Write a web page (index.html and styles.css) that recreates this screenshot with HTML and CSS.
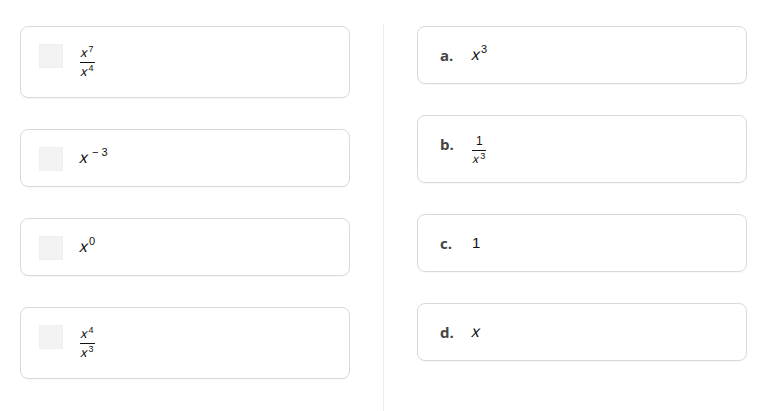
FILE: index.html
```html
<!DOCTYPE html>
<html lang="en">
<head>
<meta charset="utf-8">
<title>Match</title>
<link rel="stylesheet" href="styles.css">
</head>
<body>
<div class="match">
  <div class="col">
    <div class="card">
      <span class="box"></span>
      <span class="math"><span class="frac"><span class="num"><i>x</i><sup>7</sup></span><span class="den"><i>x</i><sup>4</sup></span></span></span>
    </div>
    <div class="card">
      <span class="box"></span>
      <span class="math"><i>x</i><sup class="neg">− 3</sup></span>
    </div>
    <div class="card">
      <span class="box"></span>
      <span class="math"><i>x</i><sup>0</sup></span>
    </div>
    <div class="card">
      <span class="box"></span>
      <span class="math"><span class="frac"><span class="num"><i>x</i><sup>4</sup></span><span class="den"><i>x</i><sup>3</sup></span></span></span>
    </div>
  </div>
  <div class="divider"></div>
  <div class="col">
    <div class="card">
      <span class="label">a.</span>
      <span class="math"><i>x</i><sup>3</sup></span>
    </div>
    <div class="card">
      <span class="label">b.</span>
      <span class="math"><span class="frac small"><span class="num">1</span><span class="den"><i>x</i><sup>3</sup></span></span></span>
    </div>
    <div class="card">
      <span class="label">c.</span>
      <span class="math">1</span>
    </div>
    <div class="card">
      <span class="label">d.</span>
      <span class="math"><i>x</i></span>
    </div>
  </div>
</div>
</body>
</html>
```
FILE: styles.css
```css
html, body {
  margin: 0;
  padding: 0;
  background: #fff;
}

.match {
  display: grid;
  grid-template-columns: 1fr 1px 1fr;
  column-gap: 33px;
  padding: 26px 37px 0 20px;
  min-height: 100vh;
  box-sizing: border-box;
}

.col {
  display: flex;
  flex-direction: column;
  gap: 31px;
}

.divider {
  background: #ececec;
  margin-top: -2px;
}

.card {
  display: flex;
  align-items: flex-start;
  gap: 17px;
  padding: 17px 18px 15px;
  border: 1px solid #d9d9d9;
  border-radius: 8px;
  box-shadow: 0 1px 1px rgba(0, 0, 0, 0.03);
  box-sizing: border-box;
  min-height: 58px;
}

.box {
  flex: none;
  width: 24px;
  height: 24px;
  box-sizing: border-box;
  background: #f3f3f3;
  border: 1px solid #efefef;
}

.label {
  flex: none;
  display: block;
  min-width: 16px;
  padding-left: 4px;
  margin-right: -1px;
  font-family: "Open Sans", "Liberation Sans", sans-serif;
  font-weight: 700;
  font-size: 15px;
  line-height: 22px;
  height: 22px;
  color: #444;
}

.math {
  display: flex;
  align-items: flex-start;
  font-family: "Liberation Sans", Arial, sans-serif;
  font-size: 15px;
  line-height: 22px;
  height: 22px;
  color: #111;
}

.math i {
  display: inline-block;
  font-style: normal;
  font-size: 16px;
  transform: skewX(-14deg);
}

.math sup {
  font-size: 11px;
  line-height: 1;
  vertical-align: 0;
  position: relative;
  top: 0;
  margin-left: 1px;
}

.math sup.neg {
  margin-left: 4px;
  white-space: pre;
}

.frac {
  display: inline-flex;
  flex-direction: column;
  align-items: center;
  font-size: 13px;
  line-height: 18px;
}

.card .math:has(.frac) {
  height: auto;
}

.frac i {
  font-size: 13px;
}

.frac sup {
  font-size: 9px;
  top: 1px;
}

.num,
.den {
  display: flex;
  align-items: flex-start;
  height: 18px;
  padding: 0 1px;
}

.den {
  border-top: 1px solid #111;
  height: 19px;
}

.frac.small {
  font-size: 12px;
  line-height: 16px;
}

.frac.small .num {
  height: 17px;
  padding: 0 4px;
}

.frac.small .den {
  height: 16px;
}

.frac.small i {
  font-size: 12px;
}
```
